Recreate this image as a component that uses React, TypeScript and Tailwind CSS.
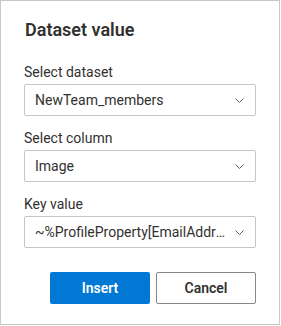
import React from "react";

const Chevron = () => (
  <svg width="9" height="5" viewBox="0 0 9 5" className="shrink-0">
    <polyline points="0.5,0.5 4.5,4.5 8.5,0.5" fill="none" stroke="#605e5c" strokeWidth="1" />
  </svg>
);

const Field = ({ label, value }: { label: string; value: string }) => (
  <div className="flex flex-col">
    <div className="h-[20px] text-[14px] leading-[20px] text-[#323130]">{label}</div>
    <div className="mt-[2px] h-[32px] w-[232px] border border-[#c8c6c4] rounded-[2px] flex items-center pl-[10px] pr-[11px]">
      <span className="flex-1 truncate text-[14px] text-[#323130] pr-[9px]">{value}</span>
      <Chevron />
    </div>
  </div>
);

export default function App() {
  return (
    <div
      className="w-[280px] h-[325px] border border-[#c8c8c8] bg-white px-[23px] pt-[17px]"
      style={{ fontFamily: 'Roboto, "Noto Sans", sans-serif' }}
    >
      <div className="h-[24px] text-[18px] leading-[24px] font-semibold text-[#323130] pl-[1px]">Dataset value</div>
      <div className="mt-[20px] flex flex-col gap-[12px]">
        <Field label="Select dataset" value="NewTeam_members" />
        <Field label="Select column" value="Image" />
        <Field label="Key value" value="~%ProfileProperty[EmailAddress]%~" />
      </div>
      <div className="mt-[24px] flex justify-end gap-[6px] w-[232px]">
        <button className="w-[100px] h-[32px] rounded-[2px] bg-[#0078d4] text-white text-[14px] font-semibold">Insert</button>
        <button className="w-[100px] h-[32px] rounded-[2px] border border-[#8a8886] bg-white text-[#323130] text-[14px] font-semibold">Cancel</button>
      </div>
    </div>
  );
}
